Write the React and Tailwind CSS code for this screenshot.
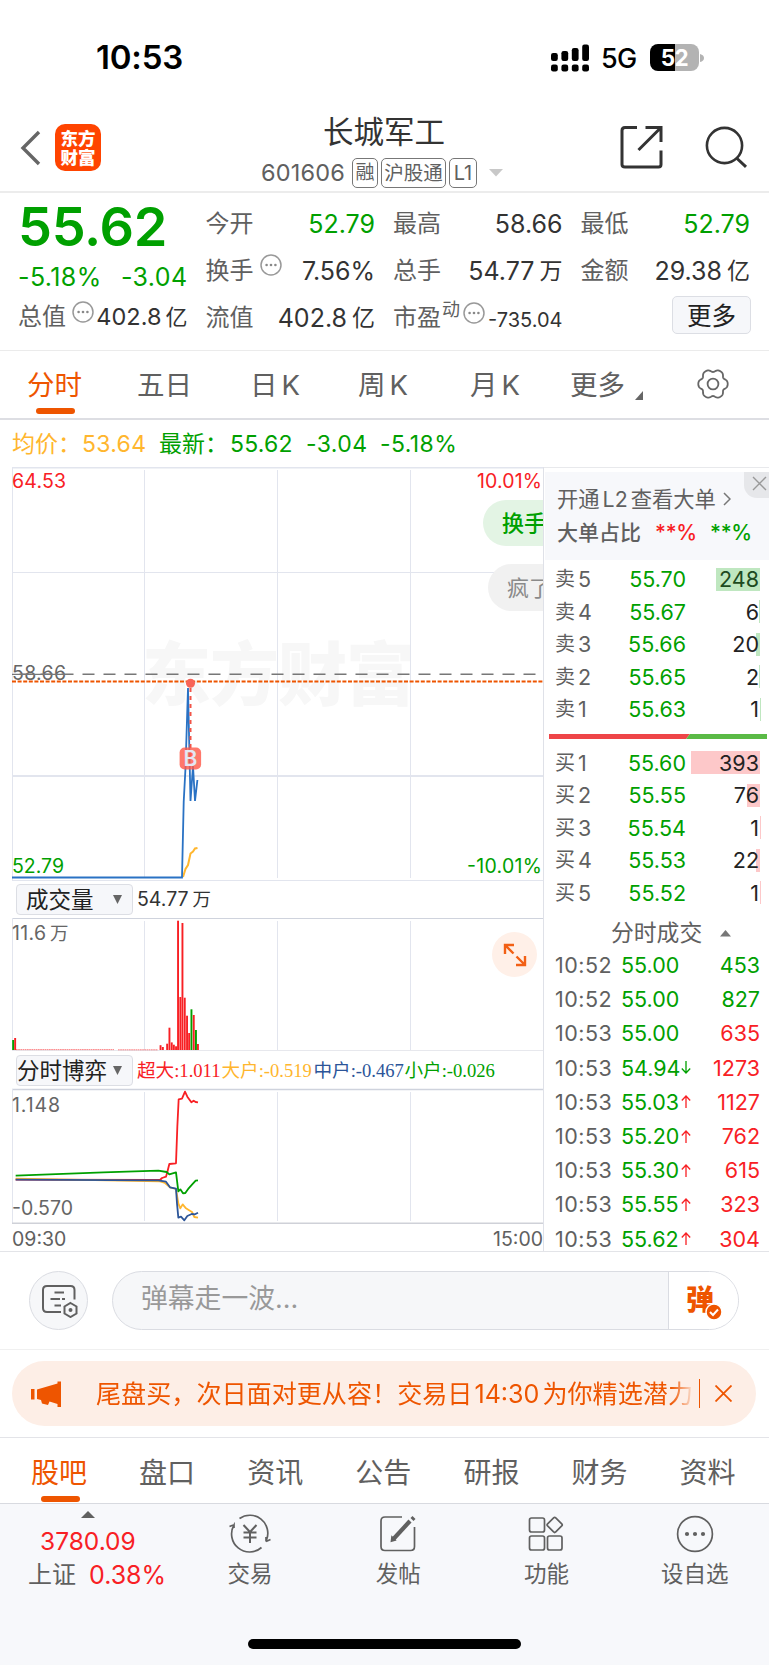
import clsx from 'clsx';

const UP = '#f82024';
const DOWN = '#00a000';

const SELLS = [
  { label: '5', price: '55.70', qty: '248', bar: 44 },
  { label: '4', price: '55.67', qty: '6', bar: 1 },
  { label: '3', price: '55.66', qty: '20', bar: 4 },
  { label: '2', price: '55.65', qty: '2', bar: 0.6 },
  { label: '1', price: '55.63', qty: '1', bar: 0.4 },
];

const BUYS = [
  { label: '1', price: '55.60', qty: '393', bar: 69 },
  { label: '2', price: '55.55', qty: '76', bar: 13 },
  { label: '3', price: '55.54', qty: '1', bar: 0.4 },
  { label: '4', price: '55.53', qty: '22', bar: 4 },
  { label: '5', price: '55.52', qty: '1', bar: 0.4 },
];

const TRADES = [
  { time: '10:52', price: '55.00', qty: '453', buy: false },
  { time: '10:52', price: '55.00', qty: '827', buy: false },
  { time: '10:53', price: '55.00', qty: '635', buy: true },
  { time: '10:53', price: '54.94', qty: '1273', buy: true, dir: 'down' },
  { time: '10:53', price: '55.03', qty: '1127', buy: true, dir: 'up' },
  { time: '10:53', price: '55.20', qty: '762', buy: true, dir: 'up' },
  { time: '10:53', price: '55.30', qty: '615', buy: true, dir: 'up' },
  { time: '10:53', price: '55.55', qty: '323', buy: true, dir: 'up' },
  { time: '10:53', price: '55.62', qty: '304', buy: true, dir: 'up' },
];

// [x, height, color]
const VOLUME = [
  [12.2, 10, DOWN], [14.2, 12, UP], [159.6, 4.8, UP], [161.9, 3, UP], [166.2, 6.3, UP],
  [168.5, 22.3, UP], [170.8, 7.6, UP], [172.9, 5.3, UP], [175.1, 3.7, UP], [177.1, 129.3, UP],
  [179.4, 53, UP], [181.5, 127, UP], [183.8, 52.3, UP], [186.1, 34.3, UP], [188.2, 17, UP],
  [190.5, 40.7, DOWN], [192.8, 35, UP], [195, 20, DOWN], [197, 6, UP],
];

const VLINES = [144.5, 277.5, 410.5];

export default function App() {
  return (
    <div className="w-[769px] h-[1665px] overflow-hidden bg-white flex flex-col text-[#606060] font-['Inter','Noto_Sans_CJK_SC',sans-serif] whitespace-nowrap">
      <StatusBar />
      <Header />
      <Quote />
      <PeriodTabs />
      <div className="h-[47px] shrink-0 flex items-center text-[23px] leading-[30px] pl-[12px] pt-px">
        <span className="w-[147px] text-[#ffb62e] flex"><span className="w-[70px]">均价：</span><span className="tracking-[0.3px]">53.64</span></span>
        <span className="text-[#00a000] flex tracking-[0.4px]"><span className="w-[71px] tracking-normal">最新：</span><span className="w-[76px] tracking-[0.2px]">55.62</span><span className="w-[74px]">-3.04</span><span>-5.18%</span></span>
      </div>
      <div className="h-[785px] shrink-0 flex border-b border-[#e3e4e8]">
        <Charts />
        <OrderBook />
      </div>
      <Danmu />
      <Banner />
      <InfoTabs />
      <BottomNav />
    </div>
  );
}

function StatusBar() {
  return (
    <div className="h-[96px] shrink-0 flex items-start justify-between pl-[96px] pr-[65px] text-black">
      <span className="mt-[37px] text-[33px] leading-[40px] font-semibold tracking-[-0.2px]">10:53</span>
      <div className="mt-[43px] h-[29px] flex items-center">
        <svg width="39" height="28" viewBox="0 0 39 28">
          {[8, 10, 13, 16.5].map((h, i) => (
            <g key={h}>
              <rect x={i * 10.4} y={17 - h} width="6.8" height={h} rx="2.2" />
              <rect x={i * 10.4} y="20.5" width="6.8" height="7" rx="2.2" />
            </g>
          ))}
        </svg>
        <span className="ml-[11px] w-[37px] text-[27px] leading-[28px] tracking-[-0.8px] font-medium mt-[2px]">5G</span>
        <span className="ml-[12px] w-[49px] h-[27px] rounded-[8px] bg-[linear-gradient(to_right,#000_52%,#b3b3b3_52%)] flex items-center justify-center text-white text-[22.5px] leading-[27px] font-bold tracking-[-0.5px]">52</span>
        <svg width="4" height="10" viewBox="0 0 4 10" className="ml-px"><path d="M0 1Q4 2 4 5T0 9Z" fill="#b3b3b3" /></svg>
      </div>
    </div>
  );
}

function Header() {
  return (
    <div className="h-[97px] shrink-0 border-b-2 border-[#ececec] flex items-start">
      <svg className="ml-[20px] mt-[34px]" width="22" height="36" viewBox="0 0 22 36">
        <path d="M19 2L3 18L19 34" fill="none" stroke="#666" strokeWidth="3.4" />
      </svg>
      <div className="ml-[13px] mt-[28px] w-[46px] h-[47px] rounded-[10px] bg-[#ff4400] text-white text-[17.5px] leading-[19px] font-black flex flex-col items-center justify-center">
        <span>东方</span>
        <span>财富</span>
      </div>
      <div className="ml-[160px] w-[243px] flex flex-col">
        <h1 className="mt-[16px] ml-[62px] text-[30.5px] leading-[40px] text-[#333]">长城军工</h1>
        <div className="mt-[6px] h-[30px] flex items-center text-[21px]">
          <span className="w-[91px] text-[23.5px] tracking-[0.2px]">601606</span>
          <span className="w-[26px] h-[30px] border border-[#777] rounded-[5px] text-[19px] leading-[28px] flex justify-center">融</span>
          <span className="ml-[3px] w-[65px] h-[30px] border border-[#777] rounded-[5px] text-[19.5px] leading-[28px] flex justify-center">沪股通</span>
          <span className="ml-[3px] w-[28px] h-[30px] border border-[#777] rounded-[5px] text-[20px] leading-[28px] flex justify-center">L1</span>
          <svg className="ml-[12px]" width="14" height="8" viewBox="0 0 14 8"><path d="M0 0H14L7 7.5Z" fill="#c8c8c8" /></svg>
        </div>
      </div>
      <svg className="ml-[116px] mt-[29px]" width="43" height="44" viewBox="0 0 43 44" fill="none" stroke="#333" strokeWidth="3">
        <path d="M17 2.5H5Q2 2.5 2 5.5V39.5Q2 42 5 42H38.5Q41 42 41 39.5V25.5" />
        <path d="M25.5 2.5H41V17M40 3.5L18.5 25" />
      </svg>
      <svg className="ml-[42px] mt-[29px]" width="44" height="44" viewBox="0 0 44 44" fill="none" stroke="#333" strokeWidth="2.6">
        <circle cx="19.5" cy="20.5" r="17.6" />
        <path d="M31.5 33L41 41.8" strokeWidth="3" />
      </svg>
    </div>
  );
}

function Dots({ className }) {
  return (
    <svg className={className} width="22" height="22" viewBox="0 0 22 22">
      <circle cx="11" cy="11" r="10" fill="none" stroke="#999" strokeWidth="1.5" />
      <circle cx="6.6" cy="11" r="1.3" fill="#888" />
      <circle cx="11" cy="11" r="1.3" fill="#888" />
      <circle cx="15.4" cy="11" r="1.3" fill="#888" />
    </svg>
  );
}

function Stat({ label, value, unit, info, green }) {
  return (
    <div className="h-[47px] mr-[-1px] flex items-center text-[24px] leading-[30px]">
      <span>{label}</span>
      {info && <Dots className="ml-[6px] mb-[11px]" />}
      <span className={clsx('ml-auto text-[25px]', green ? 'text-[#00a000]' : 'text-[#333]')}>{value}</span>
      {unit && <span className="ml-[5px] text-[23px] text-[#333]">{unit}</span>}
    </div>
  );
}

function Quote() {
  return (
    <div className="h-[158px] shrink-0 border-b border-[#ebebeb] grid grid-cols-4 gap-x-[19px] pl-[18px] pr-[20px] pt-[7px]">
      <div>
        <div className="h-[54px] leading-[54px] text-[54px] font-semibold text-[#00a000] tracking-[-0.3px]">55.62</div>
        <div className="h-[46px] mr-[-1px] leading-[46px] text-[25px] text-[#00a000] flex justify-between tracking-[0.4px]">
          <span>-5.18%</span>
          <span>-3.04</span>
        </div>
        <div className="h-[34px] mr-[-1px] leading-[34px] flex items-center text-[24px]">
          <span>总值</span>
          <Dots className="ml-[6px] mb-[10px]" />
          <span className="ml-auto text-[23.5px] text-[#333]">402.8</span>
          <span className="ml-[4px] text-[22px] text-[#333]">亿</span>
        </div>
      </div>
      <div>
        <Stat label="今开" value="52.79" green />
        <Stat label="换手" value="7.56%" info />
        <Stat label="流值" value="402.8" unit="亿" />
      </div>
      <div>
        <Stat label="最高" value="58.66" />
        <Stat label="总手" value="54.77" unit="万" />
        <div className="h-[47px] mr-[-1px] flex items-center text-[24px] leading-[30px]">
          <span>市盈</span>
          <span className="text-[18px] mb-[15px] ml-px">动</span>
          <Dots className="ml-[3px] mb-[10px]" />
          <span className="ml-auto mt-[5px] text-[20px] text-[#333]">-735.04</span>
        </div>
      </div>
      <div>
        <Stat label="最低" value="52.79" green />
        <Stat label="金额" value="29.38" unit="亿" />
        <button className="block ml-auto mt-[2px] w-[79px] h-[38px] mr-[-2px] border border-[#dcdee4] rounded-[5px] bg-[#f6f7fa] text-[24.5px] leading-[38px] text-[#222]">更多</button>
      </div>
    </div>
  );
}

function gearPath() {
  const pts = [];
  for (let i = 0; i < 120; i++) {
    const a = (i / 120) * Math.PI * 2;
    const r = 13.6 + 1.4 * Math.cos(6 * a) - 0.3 * Math.cos(12 * a);
    pts.push(`${(16 + r * Math.cos(a)).toFixed(2)},${(16 + r * Math.sin(a)).toFixed(2)}`);
  }
  return pts.join(' ');
}

function PeriodTabs() {
  return (
    <div className="h-[69px] shrink-0 border-b-2 border-[#dddee3] flex text-[27.5px] leading-[68px] pl-[27px]">
      <div className="w-[110px] flex flex-col text-[#ee5500]">
        <span className="h-[57px]">分时</span>
        <span className="ml-[9px] w-[39px] h-[6px] rounded-full bg-[#ee5500]" />
      </div>
      <span className="w-[113px]">五日</span>
      <span className="w-[108px]">日<span className="ml-[4px]">K</span></span>
      <span className="w-[112px]">周<span className="ml-[4px]">K</span></span>
      <span className="w-[100px]">月<span className="ml-[4px]">K</span></span>
      <span className="w-[65px]">更多</span>
      <svg className="mt-[40px]" width="8" height="9" viewBox="0 0 8 9"><path d="M8 0V9H0Z" fill="#666" /></svg>
      <svg className="ml-[54px] mt-[17px]" width="32" height="32" viewBox="0 0 32 32" fill="none" stroke="#666" strokeWidth="1.8">
        <polygon points={gearPath()} />
        <circle cx="16" cy="16" r="5.4" />
      </svg>
    </div>
  );
}

function Charts() {
  return (
    <div className="w-[544px] shrink-0 flex flex-col border-r border-[#dfe1e8]">
      <div className="relative h-[414px] shrink-0 overflow-hidden">
        <PriceChart />
        <div className="absolute left-[483px] top-[33px] w-[90px] h-[46px] rounded-full bg-[#e3f4e4] text-[#00a000] text-[22px] leading-[47px] pl-[19px] font-medium">换手</div>
        <div className="absolute left-[488px] top-[97px] w-[90px] h-[47px] rounded-full bg-[#f1f1f1] text-[#8a8a8a] text-[22px] leading-[48px] pl-[19px]">疯了</div>
      </div>
      <div className="h-[37px] shrink-0 flex items-center pl-[16px]">
        <Picker label="成交量" className="pl-[9px]" />
        <span className="ml-[4px] mt-px text-[19.5px] text-[#333]">54.77<span className="ml-[4px] text-[18.5px]">万</span></span>
      </div>
      <div className="relative h-[133px] shrink-0">
        <VolumeChart />
        <span className="absolute left-[492px] top-[14px] w-[45px] h-[45px] rounded-full bg-[#fff0e8] flex items-center justify-center">
          <svg width="24" height="24" viewBox="0 0 24 24" fill="none" stroke="#f26015" strokeWidth="2.4">
            <path d="M2 11V2H11M2 2L10.5 10.5M22 13V22H13M22 22L13.5 13.5" />
          </svg>
        </span>
      </div>
      <div className="h-[37px] shrink-0 flex items-center pl-[16px] pt-px">
        <Picker label="分时博弈" className="pl-0" />
        <div className="ml-[4px] mt-px flex text-[18.6px] leading-[30px] font-['Liberation_Serif','Noto_Sans_CJK_SC',serif]">
          <span className="w-[84.5px] text-[#f82024]">超大:1.011</span>
          <span className="w-[92px] text-[#ffb62e]">大户:-0.519</span>
          <span className="w-[91px] text-[#2c5599]">中户:-0.467</span>
          <span className="text-[#00a000]">小户:-0.026</span>
        </div>
      </div>
      <GameChart />
      <div className="h-[27px] shrink-0 flex justify-between pl-[12px] text-[19.5px] leading-[31px]">
        <span>09:30</span>
        <span>15:00</span>
      </div>
    </div>
  );
}

function Picker({ label, className }) {
  return (
    <div className={clsx('w-[117px] h-[31px] border border-[#dcdee4] rounded-[4px] bg-[#f6f7fa] flex items-center text-[22.5px] leading-[29px] text-[#222]', className)}>
      <span>{label}</span>
      <svg className="ml-auto mr-[10px]" width="9" height="9" viewBox="0 0 9 9"><path d="M0 0H9L4.5 9Z" fill="#666" /></svg>
    </div>
  );
}

// All three charts share the page's x axis; y is offset through the viewBox.
function PriceChart() {
  return (
    <svg width="543" height="414" viewBox="0 467 543 414" fontSize="19.5">
      <text x="142" y="700" fontSize="69" fontWeight="900" fill="#f7f7f7" textLength="273">东方财富</text>
      <g stroke="#e2e5ee">
        <path d="M12 467.7H543" strokeWidth="1.5" />
        <path d="M12.5 467V880.5M12 572.5H543M12 880.5H543" />
        <path d="M12 776H543" strokeWidth="2" />
        {VLINES.map((x) => <path key={x} d={`M${x} 470V878`} />)}
      </g>
      <text x="12" y="487.5" fill={UP} textLength="54">64.53</text>
      <text x="477" y="487.5" fill={UP} textLength="65">10.01%</text>
      <text x="12" y="680" fill="#666" textLength="54">58.66</text>
      <text x="12" y="873" fill={DOWN} textLength="52">52.79</text>
      <text x="467" y="873" fill={DOWN} textLength="75">-10.01%</text>
      <path d="M12 674.3H543" stroke="#777" strokeWidth="1.5" strokeDasharray="12 9" strokeDashoffset="13.5" />
      <path d="M12 674.3H64" stroke="#777" strokeWidth="1.2" />
      <path d="M12 681.5H543" stroke="#ee5500" strokeWidth="2" strokeDasharray="4 1.6" />
      <path d="M183 877L185.5 869L188 865L190.5 853.5L193 851.5L195 848.5L197.5 848" fill="none" stroke="#ffb62e" strokeWidth="2" />
      <path d="M12 877.5H182L183.7 802L185.5 768L188 688L190.5 801L193 766L195 801L197.4 780" fill="none" stroke="#2a72c4" strokeWidth="1.8" />
      <path d="M190.5 688V760" stroke="#f25548" strokeWidth="2" strokeDasharray="4 4" />
      <circle cx="190.5" cy="683.3" r="4.5" fill="#f86458" />
      <rect x="179.6" y="747.5" width="21.5" height="22" rx="5" fill="#ff5a4a" fillOpacity="0.82" />
      <text x="190.5" y="766" fontSize="21" fontWeight="600" fill="#e4e6f2" textAnchor="middle">B</text>
    </svg>
  );
}

function VolumeChart() {
  return (
    <svg width="543" height="133" viewBox="0 918 543 133" fontSize="19.5">
      <g stroke="#e2e5ee">
        <path d="M12 918.5H543" stroke="#cfd3dd" />
        <path d="M12.5 918V1050" />
        {VLINES.map((x) => <path key={x} d={`M${x} 921V1050`} />)}
        <path d="M12 1050.9H543" stroke="#d8dae2" />
      </g>
      <text x="12" y="940" fill="#666" textLength="34">11.6</text>
      <text x="50" y="940" fill="#666" fontSize="18.5">万</text>
      <path d="M16 1049.6H114M118 1049.8H158" stroke={UP} strokeWidth="0.8" strokeDasharray="1.7 0.5" strokeOpacity="0.7" />
      {VOLUME.map(([x, h, color]) => <rect key={x} x={x} y={1050 - h} width="1.9" height={h} fill={color} />)}
    </svg>
  );
}

function GameChart() {
  return (
    <svg className="shrink-0" width="543" height="136" viewBox="0 1088 543 136" fontSize="19.5">
      <g stroke="#e2e5ee">
        <path d="M12 1089.5H543" stroke="#cfd3dd" strokeWidth="1.5" />
        <path d="M12.5 1089V1223" />
        {VLINES.map((x) => <path key={x} d={`M${x} 1092V1221`} />)}
        <path d="M12 1223.2H543" stroke="#cfd1d8" strokeWidth="1.6" />
      </g>
      <text x="12" y="1111.5" fill="#666" textLength="48">1.148</text>
      <text x="12" y="1214.5" fill="#666" textLength="61">-0.570</text>
      <g transform="translate(0 880) scale(0.33333)" fill="none" strokeWidth="5.4" strokeLinejoin="round">
        <path stroke={UP} d="M47 899L480 900L486 894L498 890L502 876L508 852L528 850L532 740L536 658L546 656L555 635L562 650L574 667L581 662L587 666L594 667" />
        <path stroke="#ffb62e" d="M47 896L480 904L495 909L510 922L528 927L535 970L541 985L548 973L558 985L566 990L576 996L583 1011L594 1013" />
        <path stroke="#2c5599" d="M47 899L475 901L498 905L510 922L528 926L531 970L535 1013L543 1010L553 1021L562 1008L575 1002L585 1003L594 998" />
        <path stroke={DOWN} d="M47 887L310 877L475 872L500 876L508 883L528 877L535 934L541 928L549 940L556 939L566 925L576 914L587 902L594 901" />
      </g>
    </svg>
  );
}

function OrderRow({ side, row }) {
  return (
    <div className="h-[32.5px] flex items-center pl-[11px] pr-[9px] text-[21.5px] leading-[30px]">
      <span className="w-[23px] text-[20px]">{side}</span>
      <span>{row.label}</span>
      <span className="ml-auto w-[60px] text-right text-[#00a000]">{row.price}</span>
      <div className="relative w-[74px] h-[23px] flex items-center justify-end pr-px text-[#222]">
        <span
          className={clsx('absolute right-0 top-0 h-[23px]', side === '卖' ? 'bg-[#bfe7c0]' : 'bg-[#fdc8c9]')}
          style={{ width: row.bar }}
        />
        <span className={clsx('relative', row.qty === '248' && 'text-[#1d4a20]')}>{row.qty}</span>
      </div>
    </div>
  );
}

function OrderBook() {
  return (
    <div className="flex-1 flex flex-col border-t border-[#e8e9ec]">
      <div className="relative shrink-0 ml-px mt-[4px] h-[88px] bg-[#f7f8fb] pl-[12px] pt-[11px]">
        <div className="flex items-center h-[32px] text-[21.3px] leading-[30px]">
          <span>开通</span><span className="mx-[3px]">L2</span><span>查看大单</span>
          <svg className="ml-[7px]" width="8" height="14" viewBox="0 0 8 14"><path d="M1 1L7 7L1 13" fill="none" stroke="#777" strokeWidth="1.5" /></svg>
        </div>
        <div className="flex items-center h-[36px] text-[21px] leading-[30px] font-medium">
          <span className="w-[98px]">大单占比</span>
          <span className="w-[55px] tracking-[-0.3px] text-[#f82024]">**%</span>
          <span className="tracking-[-0.3px] text-[#00a000]">**%</span>
        </div>
        <span className="absolute right-0 top-0 w-[25px] h-[26px] rounded-bl-[13px] bg-[#e6e7ea] flex items-start justify-end pt-[4px] pr-[2px]">
          <svg width="15" height="15" viewBox="0 0 15 15"><path d="M1 1L14 14M14 1L1 14" stroke="#999" strokeWidth="1.4" /></svg>
        </span>
      </div>
      <div className="mt-[3px] shrink-0">
        {SELLS.map((row) => <OrderRow key={row.label} side="卖" row={row} />)}
      </div>
      <svg className="ml-[5px] mt-[8px] shrink-0" width="218" height="5" viewBox="0 0 218 5">
        <path d="M0 0H141L137 5H0Z" fill="#ee4548" />
        <path d="M141 0H218V5H137Z" fill="#5aba46" />
      </svg>
      <div className="mt-[8px] shrink-0">
        {BUYS.map((row) => <OrderRow key={row.label} side="买" row={row} />)}
      </div>
      <div className="h-[39px] shrink-0 mt-[4px] flex items-center pl-[67px] text-[22.8px] leading-[30px]">
        <span>分时成交</span>
        <svg className="ml-[18px] mt-[2px]" width="11" height="7" viewBox="0 0 11 7"><path d="M0 6.5H11L5.5 0Z" fill="#777" /></svg>
      </div>
      <div className="mt-[-4px] shrink-0">
        {TRADES.map((t, i) => (
          <div key={i} className="h-[34.2px] flex items-center pl-[11px] pr-[9px] text-[21.5px] leading-[30px]">
            <span className="w-[66px] tracking-[0.5px]">{t.time}</span>
            <span className="w-[60px] text-[#00a000]">{t.price}</span>
            {t.dir && (
              <svg width="10" height="13" viewBox="0 0 10 13" fill="none" stroke={t.dir === 'up' ? UP : DOWN} strokeWidth="1.3">
                <path d={t.dir === 'up' ? 'M5 13V1M0.8 5.5L5 1L9.2 5.5' : 'M5 0V12M0.8 7.5L5 12L9.2 7.5'} />
              </svg>
            )}
            <span className={clsx('ml-auto', t.buy ? 'text-[#f82024]' : 'text-[#00a000]')}>{t.qty}</span>
          </div>
        ))}
      </div>
    </div>
  );
}

function Danmu() {
  return (
    <div className="h-[98px] shrink-0 border-b border-[#f0f0f0] flex items-start pt-[19px] pl-[29px]">
      <span className="w-[59px] h-[59px] rounded-full border border-[#dadce2] bg-[#f6f7f9] flex items-center justify-center">
        <svg className="ml-[3px]" width="38" height="34" viewBox="0 0 38 34" fill="none" stroke="#606060" strokeWidth="2">
          <path d="M20 28H6Q2 28 2 24V6Q2 2 6 2H29.5Q33.5 2 33.5 6V15.5" />
          <path d="M13.5 8.5H23M9.5 15H19M21 15H24M13.5 21.5H20" />
          <path d="M29.5 19L35.5 22.5V29.5L29.5 33L23.5 29.5V22.5Z" />
          <circle cx="29.5" cy="26" r="1" />
        </svg>
      </span>
      <div className="ml-[24px] w-[627px] h-[59px] rounded-full border border-[#dadce2] bg-[#f6f7f9] flex overflow-hidden">
        <span className="flex-1 pl-[28px] text-[26.8px] leading-[52px] text-[#999]">弹幕走一波...</span>
        <span className="w-[70px] border-l border-[#dadce2] bg-white relative">
          <span className="block pl-[17px] pt-[14px] text-[28px] leading-[28px] font-black text-[#ee5500]">弹</span>
          <svg className="absolute left-[36px] top-[31px]" width="18" height="18" viewBox="0 0 18 18">
            <circle cx="9" cy="9" r="8" fill="#ee5500" stroke="#fff" strokeWidth="1.5" />
            <path d="M5 9L8 12L13 6.5" fill="none" stroke="#fff" strokeWidth="2" />
          </svg>
        </span>
      </div>
    </div>
  );
}

function Banner() {
  return (
    <div className="h-[88px] shrink-0 border-b border-[#e3e4e8] pt-[11px] pl-[12px]">
      <div className="w-[744px] h-[65px] rounded-full bg-[#fdeee6] flex items-center text-[#ee5500]">
        <svg className="ml-[19px]" width="30" height="26" viewBox="0 0 30 26" fill="#ee5500">
          <path d="M0 8H3.5V18.5H0ZM6 8.5L26.5 2.5V0.5H30V26H26.5V23L18.5 20.5L17 24L11 22.5L10 19L6 18Z" />
        </svg>
        <div className="ml-[35px] w-[599px] h-[36px] overflow-hidden flex text-[25.1px] leading-[36px] [mask-image:linear-gradient(to_right,#000_96%,transparent)]">
          <span>尾盘买，次日面对更从容！交易日</span>
          <span className="ml-[2px] mr-[3px]">14:30</span>
          <span>为你精选潜力</span>
        </div>
        <span className="ml-[4px] w-px h-[29px] bg-[#ee5500]" />
        <svg className="ml-[15px]" width="17" height="17" viewBox="0 0 17 17"><path d="M0.5 0.5L16.5 16.5M16.5 0.5L0.5 16.5" stroke="#ee5500" strokeWidth="1.8" /></svg>
      </div>
    </div>
  );
}

function InfoTabs() {
  const tabs = ['股吧', '盘口', '资讯', '公告', '研报', '财务', '资料'];
  return (
    <div className="h-[66px] shrink-0 border-b border-[#d8dae0] flex pl-[31px] text-[28px] leading-[70px]">
      {tabs.map((tab, i) => (
        <div key={tab} className={clsx('w-[108.1px] shrink-0 flex flex-col', i === 0 && 'text-[#ee5500]')}>
          <span className="h-[58px]">{tab}</span>
          {i === 0 && <span className="ml-[10px] w-[39px] h-[6px] rounded-full bg-[#ee5500]" />}
        </div>
      ))}
    </div>
  );
}

function NavItem({ label, children }) {
  return (
    <div className="w-[148.2px] flex flex-col items-center">
      <svg className="mt-[9px]" width="44" height="42" viewBox="0 0 44 42" fill="none" stroke="#606060" strokeWidth="1.7">
        {children}
      </svg>
      <span className="mt-[4px] text-[22.5px] leading-[30px]">{label}</span>
    </div>
  );
}

function BottomNav() {
  return (
    <div className="flex-1 bg-[#f7f8fb] flex flex-col">
      <div className="h-[135px] flex">
        <div className="w-[176px] pl-[28px]">
          <svg className="ml-[53px] mt-[7px] block" width="14" height="7" viewBox="0 0 14 7"><path d="M0 7H14L7 0Z" fill="#606060" /></svg>
          <div className="ml-[12px] mt-[7px] text-[24.5px] leading-[32px] text-[#f82024]">3780.09</div>
          <div className="mt-[2px] flex text-[24px] leading-[32px]">
            <span className="w-[61px]">上证</span>
            <span className="text-[25px] text-[#f82024]">0.38%</span>
          </div>
        </div>
        <NavItem label="交易">
          <path d="M11.5 5.5A18 18 0 0 1 38.5 27M38 28.5V24M38 28.5L42.5 26.5" />
          <path d="M33.5 34.5A18 18 0 0 1 6 12V15M6.5 11.5L1.5 13.5" />
          <path d="M15.5 12L22 19L28.5 12M22 19V30M15.5 19.5H28.5M15.5 24.5H28.5" strokeWidth="2" />
        </NavItem>
        <NavItem label="发帖">
          <path d="M26 4H9Q5 4 5 8V33.5Q5 37.5 9 37.5H34.5Q38.5 37.5 38.5 33.5V14" />
          <path d="M17 26.5L34 8" strokeWidth="4.2" />
          <path d="M36 6.5L38 4.5" strokeWidth="4.2" />
          <path d="M15.5 28L16 24L19 27Z" fill="#606060" />
        </NavItem>
        <NavItem label="功能">
          <rect x="5.5" y="5" width="15" height="14" rx="2" />
          <rect x="5.5" y="23" width="15" height="14" rx="2" />
          <rect x="23.5" y="23" width="14.5" height="14" rx="2" />
          <rect x="24.9" y="6.1" width="11.5" height="11.5" rx="1.5" transform="rotate(45 30.6 11.9)" />
        </NavItem>
        <NavItem label="设自选">
          <circle cx="22" cy="21" r="17.4" />
          <g fill="#606060" stroke="none">
            <circle cx="14" cy="21" r="2.1" />
            <circle cx="22" cy="21" r="2.1" />
            <circle cx="30" cy="21" r="2.1" />
          </g>
        </NavItem>
      </div>
      <span className="ml-[248px] w-[273px] h-[10px] rounded-full bg-black" />
    </div>
  );
}
